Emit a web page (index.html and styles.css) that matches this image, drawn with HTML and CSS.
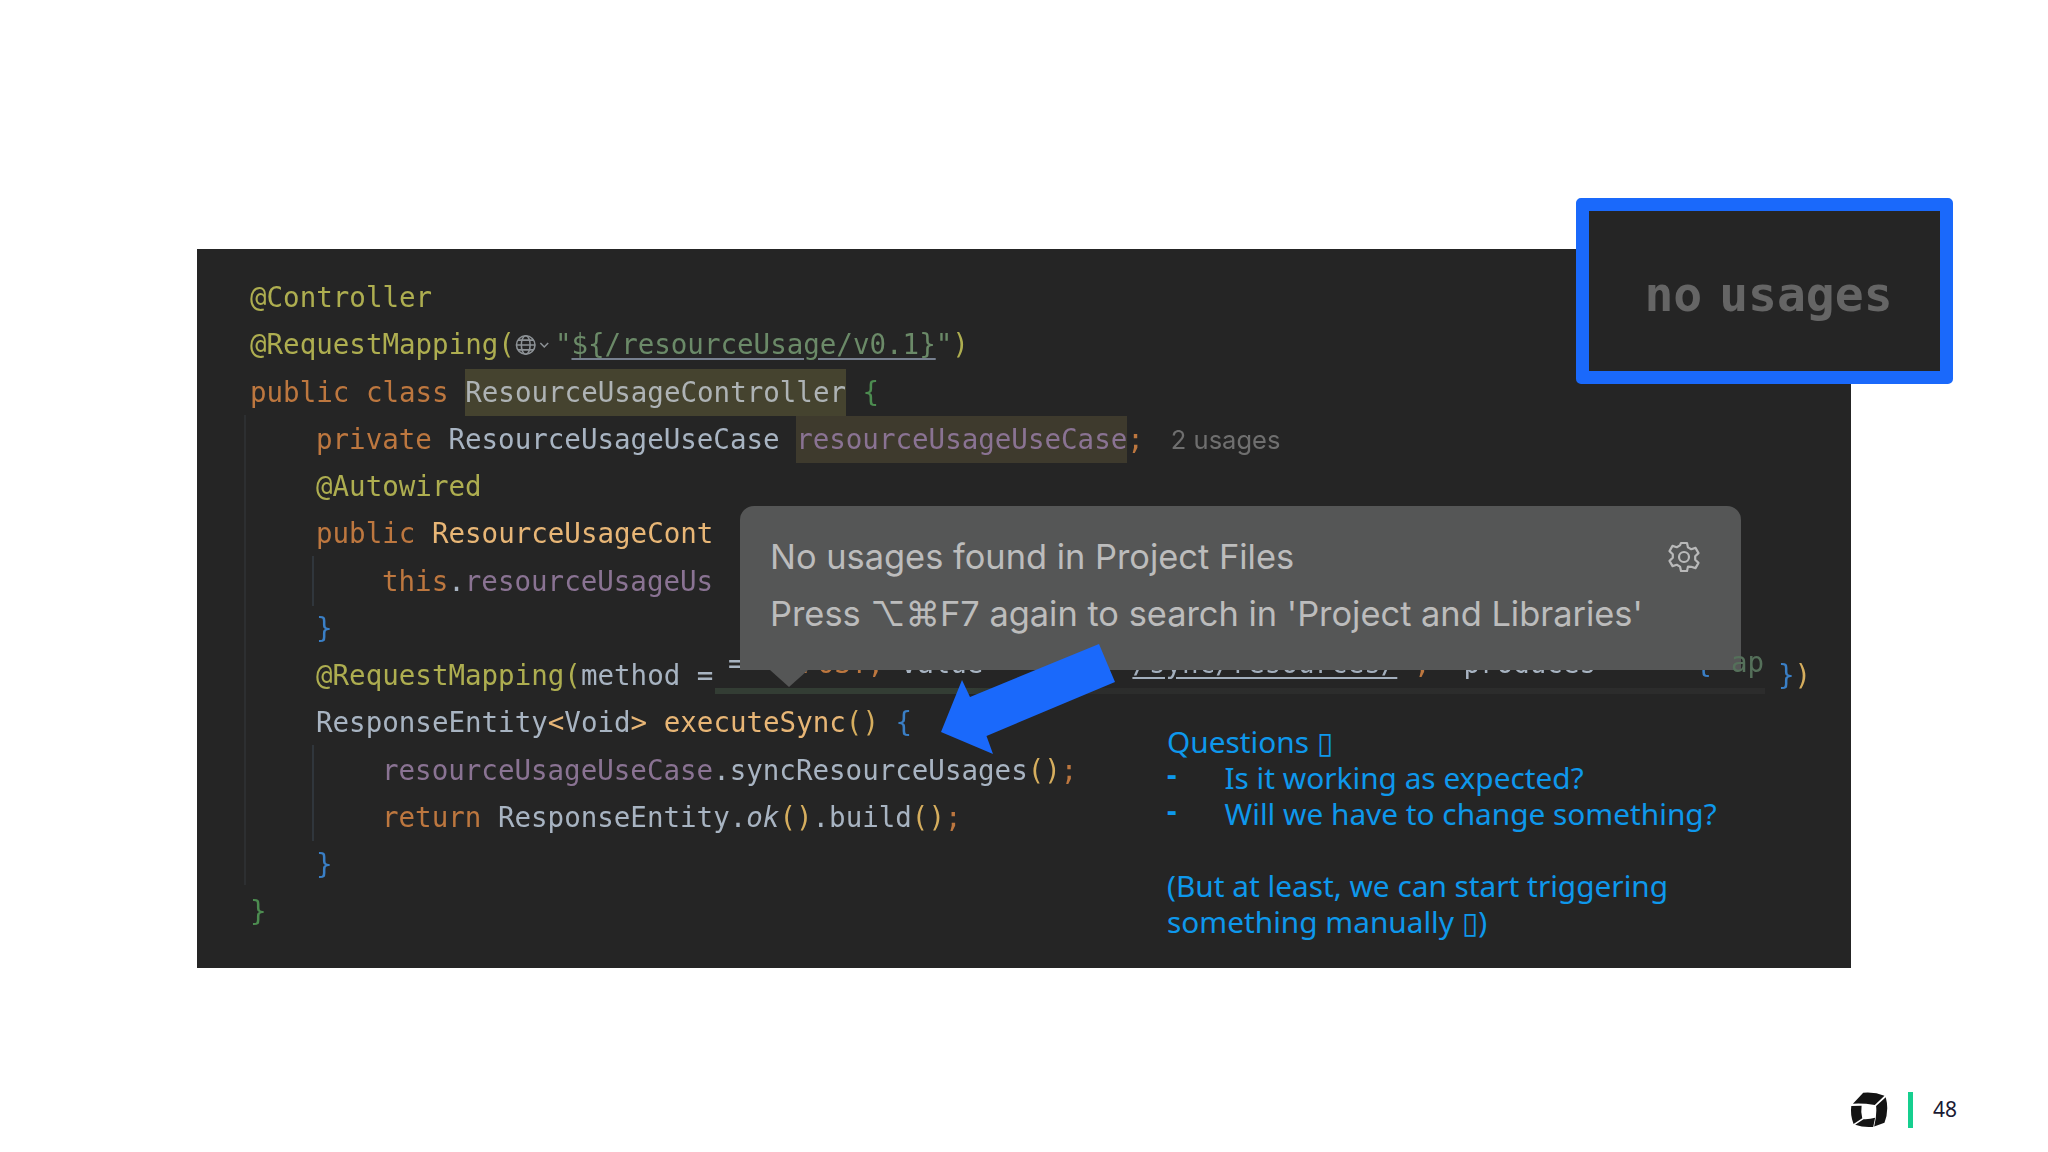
FILE: index.html
```html
<!DOCTYPE html>
<html lang="en">
<head>
<meta charset="utf-8">
<title>Slide 48</title>
<link rel="stylesheet" href="styles.css">
</head>
<body>
<main class="slide">
  <section class="panel">
    <span class="guide guide-outer"></span>
    <span class="guide guide-a"></span>
    <span class="guide guide-b"></span>
    <span class="band"></span>
    <div class="fragments"><span class="df">=</span>   <span class="frag-rest"><span class="kw">POST</span><span class="kw">,</span> <span class="df">value =</span>      <span class="df">"</span><span class="und">/sync/resources/</span><span class="df">"</span><span class="kw">,</span>  <span class="df">produces = </span>   <span class="bl">{</span></span></div>
    <div class="code">
      <div class="row"><span class="an">@Controller</span></div>
      <div class="row"><span class="an">@RequestMapping(</span><svg class="globe" viewBox="0 0 41 28"><g fill="none" stroke="#8d9296" stroke-width="1.6"><circle cx="11" cy="14" r="9.5"/><ellipse cx="11" cy="14" rx="4.5" ry="9.5"/><path d="M1.5 14h19M3 9h16M3 19h16"/><path d="M26 12l4 4 4-4"/></g></svg><span class="st">"</span><span class="st url">${/resourceUsage/v0.1}</span><span class="st">"</span><span class="an">)</span></div>
      <div class="row"><span class="kw">public class </span><span class="hl hl-class">ResourceUsageController</span> <span class="gr">{</span></div>
      <div class="row in1"><span class="kw">private </span><span class="df">ResourceUsageUseCase </span><span class="hl hl-field"><span class="fd">resourceUsageUseCase</span></span><span class="kw">;</span><span class="hint">2 usages</span></div>
      <div class="row in1"><span class="an">@Autowired</span></div>
      <div class="row in1"><span class="kw">public </span><span class="fn">ResourceUsageCont</span></div>
      <div class="row in2"><span class="kw">this</span><span class="df">.</span><span class="fd">resourceUsageUs</span></div>
      <div class="row in1"><span class="bl">}</span></div>
      <div class="row in1"><span class="an">@RequestMapping(</span><span class="df">method =</span>                                                                <span class="row-end"><span class="bl">}</span><span class="yl">)</span></span></div>
      <div class="row in1"><span class="df">ResponseEntity</span><span class="fn">&lt;</span><span class="df">Void</span><span class="fn">&gt; executeSync</span><span class="yl">()</span> <span class="bl">{</span></div>
      <div class="row in2"><span class="fd">resourceUsageUseCase</span><span class="df">.syncResourceUsages</span><span class="yl">()</span><span class="kw">;</span></div>
      <div class="row in2"><span class="kw">return </span><span class="df">ResponseEntity.</span><span class="df it">ok</span><span class="yl">()</span><span class="df">.build</span><span class="yl">()</span><span class="kw">;</span></div>
      <div class="row in1"><span class="bl">}</span></div>
      <div class="row"><span class="gr">}</span></div>
    </div>

    <aside class="popover">
      <div class="pop-head">
        <p class="pop-line">No usages found in Project Files</p>
        <svg class="gear" viewBox="0 0 34 34"><g fill="none" stroke="#b9b9b9" stroke-width="2.2" stroke-linejoin="round"><path d="M14 3h6l1 4.400 3.200 1.800 4.300-1.300 3 5.200-3.300 3.100v3.600l3.300 3.100-3 5.200-4.300-1.300L21 26.600 20 31h-6l-1-4.400-3.200-1.800-4.300 1.300-3-5.200 3.300-3.100v-3.600L2.500 11.100l3-5.200 4.300 1.300L13 5.400z"/><circle cx="17" cy="17" r="5"/></g></svg>
      </div>
      <p class="pop-line">Press ⌥⌘F7 again to search in 'Project and Libraries'</p>
      <span class="tail"></span>
    </aside>
    <span class="ap">ap</span>

    <svg class="arrow" viewBox="0 0 190 120"><polygon points="11,92 32,40 40,57 169,4 185,42 56.500,96 63,114" fill="#1a69fb"/></svg>

    <div class="notes">
      <p>Questions <span class="tofu">▯</span></p>
      <p class="item"><span class="dash">-</span>Is it working as expected?</p>
      <p class="item"><span class="dash">-</span>Will we have to change something?</p>
      <p>&nbsp;</p>
      <p>(But at least, we can start triggering</p>
      <p>something manually <span class="tofu">▯</span>)</p>
    </div>

    <div class="callout"><span>no usages</span></div>
  </section>

  <footer class="foot">
    <svg class="logo" viewBox="88 62 122 114"><g fill="#141414"><path d="M97 101L129 67Q165 64 195 76L165 105Q128 99 97 101Z"/><path d="M199 81Q210 122 195 160L163 172Q172 135 169 108Z"/><path d="M92 108L124 107Q121 128 126 146L99 164Q88 135 92 108Z"/><path d="M104 166L130 149Q148 150 166 145L160 173Q130 176 104 166Z"/></g></svg>
    <span class="bar"></span>
    <span class="num">48</span>
  </footer>
</main>
</body>
</html>
```
FILE: styles.css
```css
* { box-sizing: border-box; }
html, body { margin: 0; padding: 0; background: #fff; }
p { margin: 0; }

.slide {
  width: 2048px;
  height: 1152px;
  padding: 249px 0 0 197px;
  overflow: hidden;
}

.panel {
  position: relative;
  width: 1654px;
  height: 719px;
  background: #252525;
}

.code {
  padding: 25px 0 0 53px;
  font: 27.5px/47.25px "DejaVu Sans Mono", monospace;
  filter: blur(0.5px);
}
.row { height: 47.25px; white-space: pre; }
.in1 { padding-left: 66px; }
.in2 { padding-left: 132px; }
.row-end { margin-left: 5px; }

.an { color: #aeae50; }
.kw { color: #bd773f; }
.fn { color: #e8b676; }
.df { color: #a8b4c2; }
.fd { color: #8a7393; }
.st { color: #6b8a68; }
.gr { color: #4c8c50; }
.bl { color: #3a7fc6; }
.yl { color: #d6ae5e; }
.it { font-style: italic; }
.url { text-decoration: underline; text-decoration-color: #77808f; text-underline-offset: 4px; }

.hl { display: inline-block; height: 47.25px; vertical-align: top; }
.hl-class { background: #45432f; color: #aeb3b5; }
.hl-field { background: #3e3a2d; }

.globe { width: 40px; height: 28px; vertical-align: -5px; }

.hint {
  margin-left: 27px;
  font: 25.5px "Inter", sans-serif;
  color: #6f6f6f;
}

.guide { position: absolute; width: 2px; background: #30363c; }
.guide-outer { left: 47px; top: 166px; height: 470px; background: #2d2f31; }
.guide-a { left: 115px; top: 307px; height: 50px; }
.guide-b { left: 115px; top: 496px; height: 96px; }

.band {
  position: absolute;
  left: 518px;
  top: 439px;
  width: 1050px;
  height: 6px;
  background: linear-gradient(90deg, #333d34 0, #333d34 24%, #2c2d2c 30%, #2c2c2c 100%);
}

.fragments {
  position: absolute;
  left: 531px;
  top: 391px;
  font: 27.5px/47.25px "DejaVu Sans Mono", monospace;
  white-space: pre;
  filter: blur(0.6px);
}
.frag-rest { margin-left: 7px; }
.und { color: #a3afbd; text-decoration: underline; text-underline-offset: 4px; }

.popover {
  position: absolute;
  left: 543px;
  top: 257px;
  width: 1001px;
  height: 164px;
  padding: 26px 30px 0;
  display: flex;
  flex-direction: column;
  gap: 7px;
  background: #555656;
  border-radius: 14px 14px 0 0;
}
.pop-head { display: flex; justify-content: space-between; align-items: center; padding-right: 10px; }
.pop-line {
  font: 34.4px/50px "Inter", sans-serif;
  color: #bcbcbc;
  white-space: nowrap;
}
.gear { width: 34px; height: 34px; }
.tail {
  position: absolute;
  left: 30px;
  bottom: -17px;
  width: 0;
  height: 0;
  border-left: 19px solid transparent;
  border-right: 19px solid transparent;
  border-top: 17px solid #555656;
}

.ap {
  position: absolute;
  left: 1534px;
  top: 390px;
  font: 27.5px/47.25px "DejaVu Sans Mono", monospace;
  color: #55705a;
  filter: blur(0.6px);
}

.arrow {
  position: absolute;
  left: 733px;
  top: 391px;
  width: 190px;
  height: 120px;
}

.notes {
  position: absolute;
  left: 970px;
  top: 475px;
  font: 29.8px/36px "Noto Sans", sans-serif;
  color: #0e98ec;
  white-space: nowrap;
}
.notes p { height: 36px; }
.item { display: flex; }
.dash { width: 57.5px; font-weight: 700; transform: translateY(-4px); }
.tofu { font-family: "DejaVu Sans", sans-serif; line-height: 0; }

.callout {
  position: absolute;
  left: 1379px;
  top: -51px;
  width: 377px;
  height: 186px;
  display: flex;
  justify-content: center;
  align-items: center;
  background: #252525;
  border: 13px solid #1a69fb;
  border-radius: 5px;
  font: 700 48px "DejaVu Sans Mono", monospace;
  word-spacing: -12px;
  color: #656565;
}
.callout span { filter: blur(0.6px); position: relative; left: 4px; top: 3px; }

.foot {
  display: flex;
  align-items: center;
  width: 1760px;
  margin-top: 122px;
  padding-left: 1653px;
}
.logo { width: 42px; height: 39px; }
.bar { width: 5px; height: 36px; margin-left: 19px; background: #16cf8f; }
.num { margin-left: 20px; padding-bottom: 2px; font: 21px "Noto Sans", sans-serif; color: #1a1a33; }
```
